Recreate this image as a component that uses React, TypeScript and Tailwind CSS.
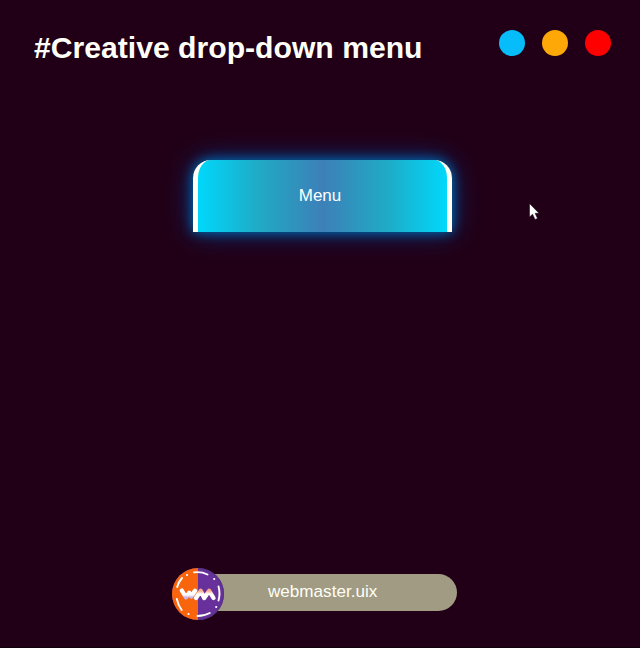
import React from "react";

function WindowDots() {
  return (
    <div className="flex gap-[17px]">
      <span className="size-[26px] rounded-full bg-[#06bdf9]" />
      <span className="size-[26px] rounded-full bg-[#fda806]" />
      <span className="size-[26px] rounded-full bg-[#ff0000]" />
    </div>
  );
}

function Logo() {
  return (
    <svg viewBox="0 0 52 52" className="relative size-[52px] shrink-0">
      <defs>
        <linearGradient id="fold-left" x1="0" y1="0" x2="0" y2="1">
          <stop offset="0.6" stopColor="#ffffff" />
          <stop offset="1" stopColor="#c9b6e2" />
        </linearGradient>
        <linearGradient id="fold-right" x1="0" y1="0" x2="0" y2="1">
          <stop offset="0" stopColor="#f7a98c" />
          <stop offset="0.45" stopColor="#ffffff" />
        </linearGradient>
      </defs>
      <circle cx="26" cy="26" r="26" fill="#68309a" />
      <path d="M26 0A26 26 0 0 0 26 52Z" fill="#f9650c" />
      <path d="M26 .6A25.4 25.4 0 0 1 26 51.4" fill="none" stroke="#573386" strokeWidth="1.2" />
      <g fill="none" stroke="#fff" strokeWidth="1.9" strokeLinecap="round">
        <path d="M22 4.4Q29 3.4 35.5 6.5" />
        <path d="M5.2 19Q6.5 14 10 10" />
        <path d="M4.8 31Q6.2 37.5 9.7 42" />
        <path d="M46.5 18.5Q48.5 25.5 46.5 32.5" />
        <path d="M25.5 48Q32.5 48 37.8 45" />
      </g>
      <g fill="#fff">
        <circle cx="15" cy="7" r="1.1" />
        <circle cx="42.2" cy="11" r="1.1" />
        <circle cx="44.2" cy="39" r="1.1" />
        <circle cx="16.5" cy="46" r="1.1" />
      </g>
      <g fill="none" strokeWidth="4.3" strokeLinecap="round" strokeLinejoin="round">
        <path d="M9.8 22.5L14 29.5L17.2 24.8L19.2 28.5L23 22.8" stroke="url(#fold-left)" />
        <path d="M24 30L28.8 22.8L32.2 30L37.2 22.8L41.5 30" stroke="url(#fold-right)" />
      </g>
    </svg>
  );
}

function Signature() {
  return (
    <footer className="mr-[11px] mt-auto flex h-[52px] w-[285px] items-center">
      <Logo />
      <div className="-z-10 -ml-[26px] -mt-[4px] flex h-[37px] flex-1 items-center rounded-r-full bg-[#a19b84] pl-[70px] text-[17.1px] text-[#fffff4]">
        webmaster.uix
      </div>
    </footer>
  );
}

function Cursor() {
  return (
    <svg viewBox="0 0 12 18" className="absolute left-[529px] top-[203px] h-[18px] w-[12px]">
      <path d="M.5 .5V14L3.6 11.2L6 16.5L8.5 15.4L6.1 10.3H10Z" fill="#fff" stroke="#090018" strokeWidth=".5" />
    </svg>
  );
}

export default function App() {
  return (
    <main className="relative isolate flex h-[648px] w-[640px] flex-col items-center overflow-hidden border-b border-[#100008] bg-[#210017] pb-[27px] font-['Liberation_Sans',Arial,sans-serif] text-white">
      <header className="flex w-full justify-between pl-[34px] pr-[29px] pt-[30px]">
        <h1 className="text-[30.15px] font-bold leading-[35px] text-[#fffff8]">#Creative drop-down menu</h1>
        <WindowDots />
      </header>
      <button className="ml-[5px] mt-[95px] h-[72px] w-[259px] rounded-t-[18px] border-x-[5px] border-[#fffff4] bg-[linear-gradient(90deg,#00d8fb,#20a9c4_25%,#3d80b8_50%,#20a9c4_75%,#00d8fb)] pr-[5px] text-[17px] shadow-[0_0_12px_#0070b0,0_0_26px_#003c90]">
        Menu
      </button>
      <Signature />
      <Cursor />
    </main>
  );
}
